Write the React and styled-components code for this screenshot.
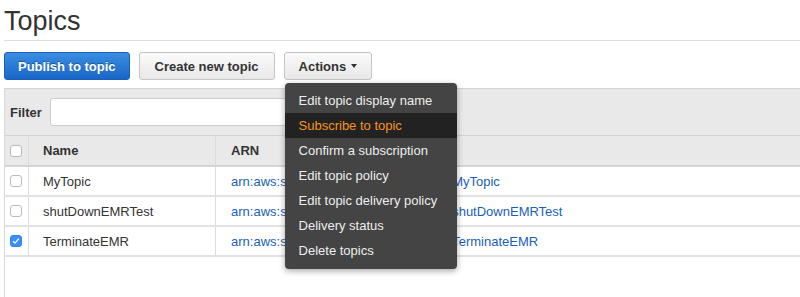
import React from 'react';
import styled, { createGlobalStyle } from 'styled-components';

const GlobalStyle = createGlobalStyle`
  html, body {
    margin: 0;
    padding: 0;
    background: #fff;
    font-family: "Liberation Sans", Arial, Helvetica, sans-serif;
    overflow: hidden;
  }
`;

export const Page = styled.div`
  padding: 0 0 0 4px;
  width: 796px;
  height: 297px;
  overflow: hidden;
`;

export const Title = styled.h1`
  margin: 0;
  padding-top: 5px;
  height: 35px;
  font-size: 27px;
  line-height: 32px;
  font-weight: normal;
  color: #333;
  border-bottom: 1px solid #ddd;
`;

export const Toolbar = styled.div`
  display: flex;
  gap: 9px;
  margin-top: 11px;
  height: 28px;
`;

export const Button = styled.button`
  height: 28px;
  padding: 0 ${(p) => p.$pad || 13}px;
  border-radius: 3px;
  font-family: inherit;
  font-size: 13px;
  font-weight: bold;
  display: flex;
  align-items: center;
  gap: 5px;
  cursor: pointer;
  border: 1px solid ${(p) => (p.$primary ? '#1b5eb5' : '#c4c4c4')};
  color: ${(p) => (p.$primary ? '#fff' : '#333')};
  text-shadow: ${(p) => (p.$primary ? '0 -1px 0 rgba(0,0,0,0.35)' : 'none')};
  background: ${(p) =>
    p.$primary
      ? 'linear-gradient(#3a8ee2, #1a66c6)'
      : 'linear-gradient(#fafafa, #e8e8e8)'};
`;

export const Caret = styled.span`
  width: 0;
  height: 0;
  border-left: 3.5px solid transparent;
  border-right: 3.5px solid transparent;
  border-top: 4px solid #333;
`;

export const DropWrap = styled.div`
  position: relative;
`;

export const Menu = styled.ul`
  position: absolute;
  top: 31px;
  left: 1px;
  width: 172px;
  margin: 0;
  padding: 5px 0 6px;
  list-style: none;
  background: #444;
  border-radius: 4px;
  box-shadow: 0 2px 6px rgba(0, 0, 0, 0.35);
  z-index: 10;
`;

export const MenuItem = styled.li`
  height: 25px;
  line-height: 25px;
  padding-left: 14px;
  font-size: 13px;
  white-space: nowrap;
  color: ${(p) => (p.$active ? '#f7941d' : '#eee')};
  background: ${(p) => (p.$active ? '#222' : 'transparent')};
`;

export const Panel = styled.div`
  margin-top: 8px;
  border-top: 1px solid #d4d4d4;
  border-left: 1px solid #d8d8d8;
  height: 300px;
`;

export const FilterBar = styled.div`
  display: flex;
  align-items: center;
  gap: 8px;
  height: 46px;
  padding-left: 5px;
  background: #e9e9e9;
  border-bottom: 1px solid #d2d2d2;
`;

export const FilterLabel = styled.label`
  font-size: 13px;
  font-weight: bold;
  color: #333;
`;

export const FilterInput = styled.input`
  width: 350px;
  height: 28px;
  box-sizing: border-box;
  border: 1px solid #ccc;
  border-radius: 3px;
  background: #fff;
  outline: none;
`;

export const Row = styled.div`
  display: grid;
  grid-template-columns: 24px 187px 1fr;
  height: ${(p) => (p.$head ? 31 : 30)}px;
  box-sizing: border-box;
  border-bottom: 2px solid ${(p) => (p.$head ? '#d4d4d4' : '#e2e2e2')};
  background: ${(p) => (p.$head ? '#e9e9e9' : '#fff')};
  font-size: 13px;
  font-weight: ${(p) => (p.$head ? 'bold' : 'normal')};
  color: #333;
`;

export const Cell = styled.div`
  display: flex;
  align-items: center;
  padding-left: ${(p) => p.$pl || 0}px;
  border-right: ${(p) => (p.$sep ? '1px solid #dcdcdc' : 'none')};
  white-space: nowrap;
  overflow: hidden;
`;

export const Link = styled.a`
  color: #1a5fb8;
  text-decoration: none;
`;

export const Box = styled.span`
  width: 12px;
  height: 12px;
  margin-left: 5px;
  border-radius: 3px;
  box-sizing: border-box;
  display: inline-flex;
  align-items: center;
  justify-content: center;
  border: 1px solid ${(p) => (p.$checked ? '#2f86f2' : '#bbb')};
  background: ${(p) => (p.$checked ? '#3b8ff5' : '#fff')};
`;

function Check({ checked }) {
  return (
    <Box $checked={checked}>
      {checked && (
        <svg width="8" height="8" viewBox="0 0 8 8">
          <path d="M1.2 4.2 L3.1 6.1 L6.8 1.6" fill="none" stroke="#fff" strokeWidth="1.3" />
        </svg>
      )}
    </Box>
  );
}

const topics = [
  { name: 'MyTopic', checked: false },
  { name: 'shutDownEMRTest', checked: false },
  { name: 'TerminateEMR', checked: true },
];

const menuItems = [
  'Edit topic display name',
  'Subscribe to topic',
  'Confirm a subscription',
  'Edit topic policy',
  'Edit topic delivery policy',
  'Delivery status',
  'Delete topics',
];

export default function App() {
  return (
    <>
      <GlobalStyle />
      <Page>
        <Title>Topics</Title>
        <Toolbar>
          <Button $primary>Publish to topic</Button>
          <Button $pad={15}>Create new topic</Button>
          <DropWrap>
            <Button $pad={14}>
              Actions <Caret />
            </Button>
            <Menu>
              {menuItems.map((m, i) => (
                <MenuItem key={m} $active={i === 1}>
                  {m}
                </MenuItem>
              ))}
            </Menu>
          </DropWrap>
        </Toolbar>
        <Panel>
          <FilterBar>
            <FilterLabel>Filter</FilterLabel>
            <FilterInput />
          </FilterBar>
          <Row $head>
            <Cell $sep>
              <Check />
            </Cell>
            <Cell $sep $pl={14}>Name</Cell>
            <Cell $pl={15}>ARN</Cell>
          </Row>
          {topics.map((t) => (
            <Row key={t.name}>
              <Cell $sep>
                <Check checked={t.checked} />
              </Cell>
              <Cell $sep $pl={14}>{t.name}</Cell>
              <Cell $pl={15}>
                <Link href="#">arn:aws:sns:us-east-1:123456789012:{t.name}</Link>
              </Cell>
            </Row>
          ))}
        </Panel>
      </Page>
    </>
  );
}
